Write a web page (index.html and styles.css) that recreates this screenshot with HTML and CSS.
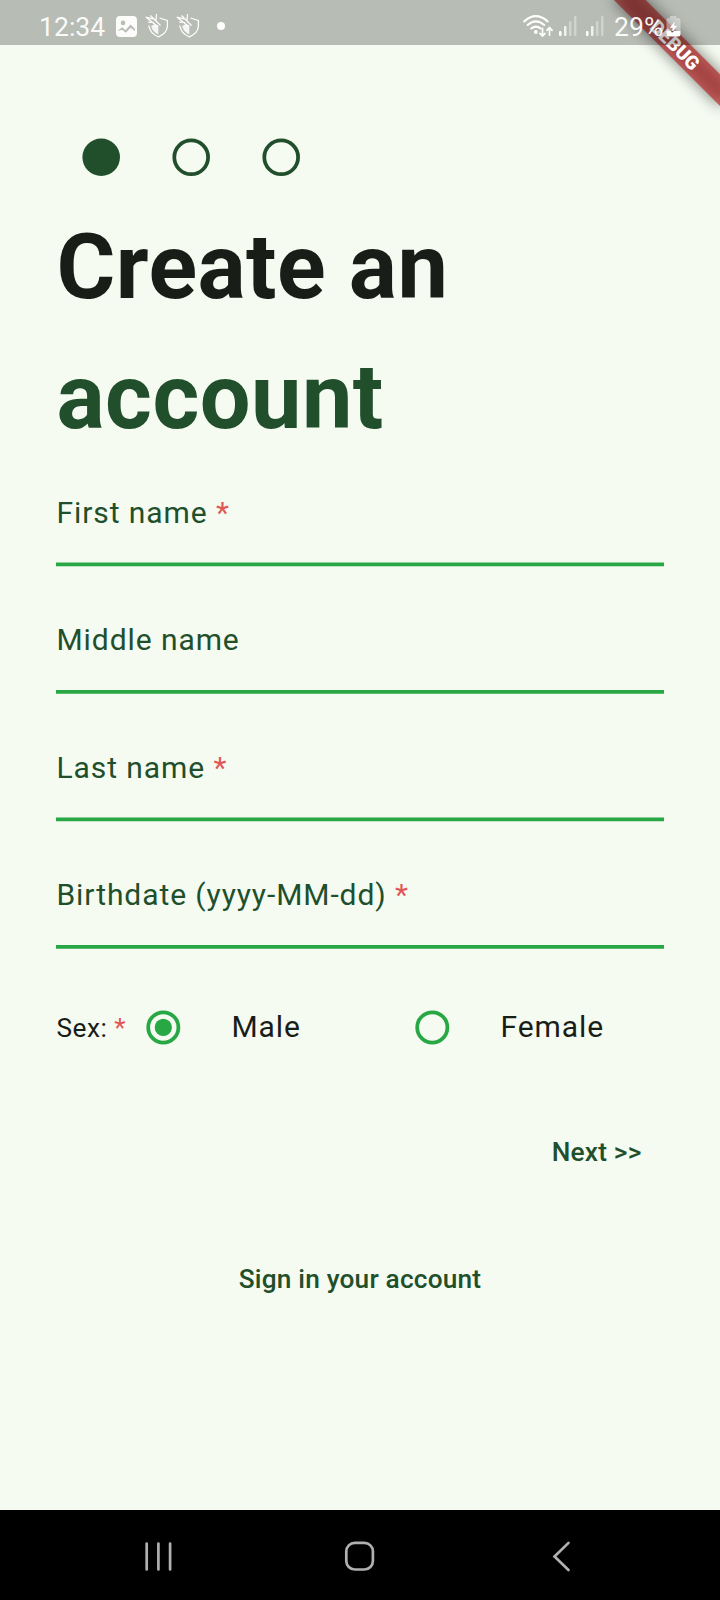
FILE: index.html
```html
<!DOCTYPE html>
<html lang="en">
<head>
<meta charset="utf-8">
<title>Create an account</title>
<link rel="stylesheet" href="styles.css">
</head>
<body>
<div class="screen">
  <svg class="banner" width="150" height="150" viewBox="-150 0 150 150">
    <defs><filter id="soft" x="-30%" y="-150%" width="160%" height="400%"><feGaussianBlur stdDeviation="7.4"/></filter></defs>
    <g transform="rotate(45)">
      <rect x="-75" y="52.5" width="150" height="22.5" fill="#000" fill-opacity=".5" filter="url(#soft)"/>
      <rect x="-75" y="52.5" width="150" height="22.5" fill="#b71c1c" fill-opacity=".63"/>
      <text class="banner-text" x="0" y="70.4" text-anchor="middle">DEBUG</text>
    </g>
  </svg>

  <header class="status">
    <span class="clock">12:34</span>
    <svg class="ic-image" width="21" height="21" viewBox="0 0 21 21"><path fill="#fff" fill-rule="evenodd" d="M4 0H17Q21 0 21 4V17Q21 21 17 21H4Q0 21 0 17V4Q0 0 4 0ZM7 4.6A2.3 2.3 0 1 0 7 9.2A2.3 2.3 0 1 0 7 4.6ZM2 15V14.5L6.2 11.2L9.5 14.2L14.5 8.6L19 13V15L14.5 11.8L9.8 16.8L6.2 13.8Z" fill-opacity=".95"/></svg>
    <svg class="ic-shield" width="24" height="24" viewBox="0 0 24 24"><use href="#shield"/></svg>
    <svg class="ic-shield2" width="24" height="24" viewBox="0 0 24 24">
      <g id="shield" fill="none" stroke="#fff" stroke-width="1.3" stroke-linejoin="round">
        <path d="M14.5 4L22.4 6.5V12.5Q21.5 19.5 13.5 22.8Q5 19.8 3.8 11.5"/>
        <path d="M13.3 11.5V20.5Q7.5 18 6.2 12L9 10.5Z" fill="#fff" stroke="none" fill-opacity=".85"/>
        <path d="M.8 3L13 12.8M5.5 1.5L15.5 11.5M11.5 0L11 6.5M.8 3L8 4.8M3.2 8.2L9 8.5" stroke-width="1.2"/>
      </g>
    </svg>
    <i class="dot"></i>
    <svg class="ic-wifi" width="31" height="23" viewBox="0 0 31 23">
      <g fill="none" stroke="#fff" stroke-width="2.1" stroke-linecap="round">
        <path d="M1.3 6.4Q12.8 -4 24.6 6.4M4.7 10Q12.8 2.8 21.2 10M8.2 13.5Q12.8 9.6 17.7 13.5"/>
        <path d="M19.5 13.3V20.8M16.9 18.3L19.5 21L22.1 18.3M26.5 20.2V12.8M23.9 15.3L26.5 12.6L29.1 15.3" stroke-width="1.7"/>
      </g><circle cx="12.8" cy="17" r="1.9" fill="#fff"/>
    </svg>
    <svg class="ic-signal" width="18" height="20" viewBox="0 0 18 20"><g id="bars" fill="#fff"><rect y="15" width="2.5" height="5" rx="1"/><rect x="5" y="10" width="2.5" height="10" rx="1" fill-opacity=".8"/><g fill-opacity=".35"><rect x="10" y="5" width="2.5" height="15" rx="1"/><rect x="15" width="2.5" height="20" rx="1"/></g></g></svg>
    <svg class="ic-signal2" width="18" height="20" viewBox="0 0 18 20"><use href="#bars"/></svg>
    <span class="percent">29%</span>
    <svg class="ic-battery" width="15" height="21" viewBox="0 0 15 21"><path d="M4 0H10.5V2H12.5Q14.5 2 14.5 4V15H.5V4Q.5 2 2.5 2H4Z" fill="#fff" fill-opacity=".4"/><path d="M.5 15H14.5V18Q14.5 20.5 12 20.5H3Q.5 20.5 .5 18Z" fill="#fff"/><path d="M8.8 5.5L3.8 11.8H6.8L5.8 16.5L11.2 9.8H8Z" fill="#fff"/><path d="M5 15H8L6 16.8Z" fill="#555"/></svg>
  </header>

  <main class="content">
    <svg class="steps" width="220" height="39" viewBox="0 0 220 39"><circle cx="19.2" cy="19.3" r="18.75" fill="#214f2c"/><circle cx="109.2" cy="19.3" r="16.9"/><circle cx="199.2" cy="19.3" r="16.9"/></svg>
    <h1 class="title">Create an<br><span class="title-accent">account</span></h1>
    <form class="fields">
      <div class="field"><label class="label">First name <b class="req">*</b></label><svg class="rule" height="5"><rect y=".5" width="100%" height="3.75"/></svg></div>
      <div class="field"><label class="label">Middle name</label><svg class="rule" height="5"><rect width="100%" height="3.75"/></svg></div>
      <div class="field"><label class="label">Last name <b class="req">*</b></label><svg class="rule" height="5"><rect y=".5" width="100%" height="3.75"/></svg></div>
      <div class="field"><label class="label">Birthdate (yyyy-MM-dd) <b class="req">*</b></label><svg class="rule" height="5"><rect width="100%" height="3.75"/></svg></div>
    </form>
    <div class="sex">
      <span class="sex-label">Sex: <b class="req">*</b></span>
      <svg class="radio" width="36" height="36" viewBox="-18 -18 36 36"><circle cx=".3" cy=".4" r="15.1" fill="none" stroke="#28a745" stroke-width="3.75"/><circle cx=".3" cy=".4" r="8.6" fill="#28a745"/></svg>
      <span class="option option-male">Male</span>
      <svg class="radio" width="36" height="36" viewBox="-18 -18 36 36"><circle cx=".3" cy=".4" r="15.1" fill="none" stroke="#28a745" stroke-width="3.75"/></svg>
      <span class="option">Female</span>
    </div>
    <a class="link next">Next &gt;&gt;</a>
    <a class="link signin">Sign in your account</a>
  </main>

  <nav class="nav">
    <svg width="30" height="32" viewBox="0 0 30 32"><path d="M3.7 3.5V29.5M15.4 3.5V29.5M27.1 3.5V29.5"/></svg>
    <svg class="home" width="32" height="32" viewBox="0 0 32 32"><rect x="2.3" y="2.9" width="26.6" height="26.6" rx="8.5"/></svg>
    <svg width="20" height="32" viewBox="0 0 20 32"><path d="M17.5 2.9L3.5 16.5L17.5 30"/></svg>
  </nav>
</div>
</body>
</html>
```
FILE: styles.css
```css
body {
  margin: 0;
  background: #f5fbf1;
  font-family: Roboto, "Liberation Sans", sans-serif;
  color: #191d18;
}

.screen {
  position: relative;
  display: flex;
  flex-direction: column;
  width: 720px;
  height: 1600px;
  overflow: hidden;
}

.banner {
  position: absolute;
  top: 0;
  right: 0;
}

.banner-text {
  font-size: 19.1px;
  font-weight: 900;
  fill: #fff;
}

.status {
  position: relative;
  display: flex;
  align-items: flex-start;
  box-sizing: border-box;
  height: 45px;
  padding: 0 39px;
  background: rgba(0, 0, 0, 0.25);
  color: rgba(255, 255, 255, 0.94);
  font-size: 26.6px;
  line-height: 36px;
}

.clock,
.percent {
  margin-top: 9px;
  white-space: nowrap;
}

.clock { width: 77px; }
.ic-image { margin-top: 16px; }
.ic-shield { margin: 14px 0 0 8px; }
.ic-shield2 { margin: 14px 0 0 7px; }

.dot {
  width: 8px;
  height: 8px;
  margin: 22px 0 0 17px;
  border-radius: 50%;
  background: #fff;
}

.ic-wifi { margin: 15px 0 0 auto; }
.ic-signal { margin: 16px 0 0 5px; }
.ic-signal2 { margin: 16px 0 0 9px; }
.percent { width: 53px; margin-left: 10px; }
.ic-battery { margin: 16px 0 0 -1px; }

.content {
  display: flex;
  flex: 1;
  flex-direction: column;
  padding: 93px 56px 0;
}

.steps {
  margin-left: 26px;
  fill: none;
  stroke: #214f2c;
  stroke-width: 3.75;
}

.steps circle:first-child { stroke: none; }

.title {
  margin: 26px 0 0 0.5px;
  font-size: 90px;
  font-weight: 700;
  line-height: 130px;
  letter-spacing: 0.45px;
}

.title-accent { color: #214f2c; }

.fields {
  display: grid;
  grid-auto-rows: 105px;
  row-gap: 22.5px;
  margin-top: -1px;
}

.field {
  display: flex;
  flex-direction: column;
  justify-content: space-between;
}

.label {
  padding: 29px 0 0 0.5px;
  color: #214f2c;
  font-size: 30px;
  line-height: 44px;
  letter-spacing: 0.92px;
}

.field:nth-child(even) .label { padding-top: 28px; }

.req {
  color: #e25656;
  font-weight: 400;
}

.rule {
  width: 608px;
  fill: #28a745;
}

.sex {
  display: flex;
  align-items: center;
  height: 44px;
  margin-top: 55.5px;
}

.sex-label {
  width: 88.5px;
  padding: 2px 0 0 0.5px;
  font-size: 26.25px;
  line-height: 44px;
  letter-spacing: 0.47px;
}

.option {
  margin-left: 50.5px;
  font-size: 30px;
  line-height: 44px;
  letter-spacing: 0.92px;
}

.option-male { width: 182.5px; }

.link {
  color: #214f2c;
  font-size: 26.25px;
  font-weight: 500;
  line-height: 40px;
  letter-spacing: 0.19px;
}

.next {
  align-self: flex-end;
  margin: 83px 22.5px 0 0;
}

.signin {
  align-self: center;
  margin-top: 87px;
}

.nav {
  display: flex;
  justify-content: space-between;
  align-items: center;
  box-sizing: border-box;
  height: 90px;
  padding: 1px 149px 0 143px;
  background: #000;
  fill: none;
  stroke: #b0b0b0;
  stroke-width: 2.7;
  stroke-linecap: round;
}

.home { margin-right: 5px; }
```
